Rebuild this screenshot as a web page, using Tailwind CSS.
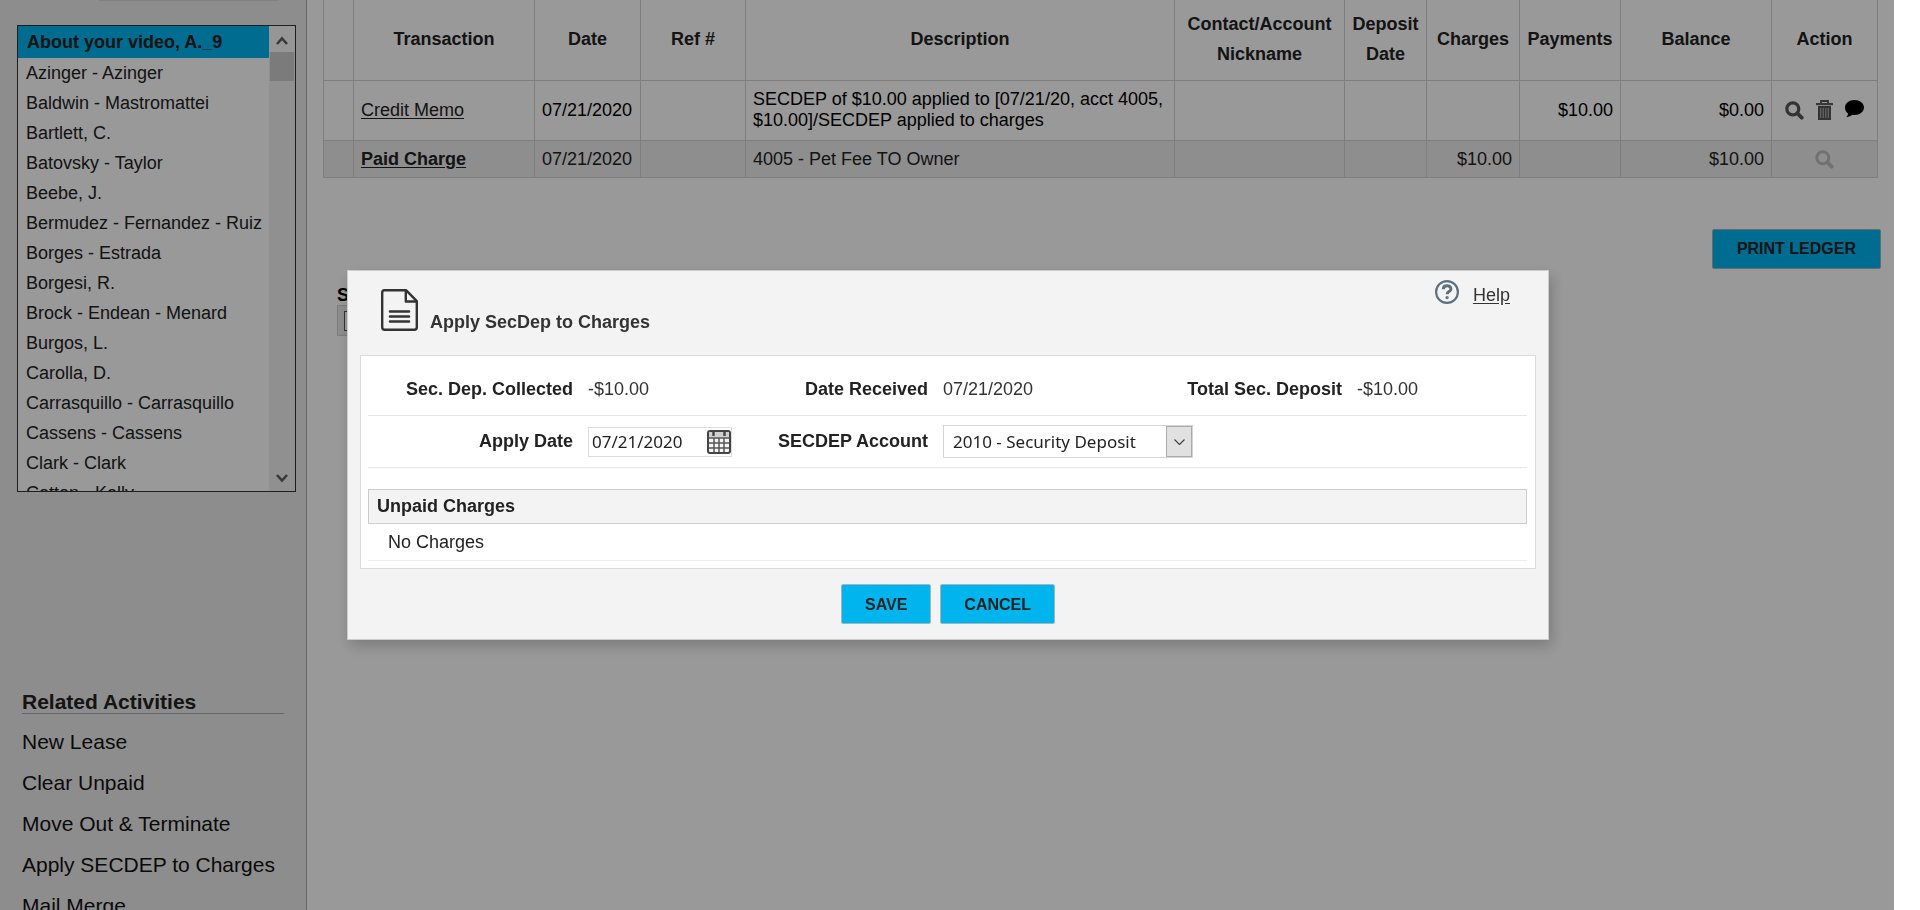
<!DOCTYPE html>
<html lang="en">
<head>
<meta charset="utf-8">
<title>Tenant Ledger</title>
<script src="https://cdn.jsdelivr.net/npm/@tailwindcss/browser@4"></script>
</head>
<body class="h-screen overflow-hidden bg-white pr-[26px] text-[18px] leading-[21px] text-[#222] [font-family:'Liberation_Sans',Arial,sans-serif]">

<div class="flex h-full">
  <aside class="flex w-[307px] shrink-0 flex-col border-r border-[#a9a9b5] bg-[#ebebeb]">
    <div class="mr-[27px] ml-[99px] h-px shrink-0 bg-[#d6d6d6]"></div>
    <nav aria-label="Tenants" class="mt-6 mr-[10px] ml-[17px] flex h-[467px] shrink-0 border border-[#333] bg-white">
      <ul class="min-w-0 flex-1 overflow-hidden whitespace-nowrap leading-[30px]">
        <li><a href="#" class="block bg-[#00b4ee] pl-[9px] font-bold leading-8">About your video, A._9</a></li>
        <li><a href="#" class="block pl-2">Azinger - Azinger</a></li>
        <li><a href="#" class="block pl-2">Baldwin - Mastromattei</a></li>
        <li><a href="#" class="block pl-2">Bartlett, C.</a></li>
        <li><a href="#" class="block pl-2">Batovsky - Taylor</a></li>
        <li><a href="#" class="block pl-2">Beebe, J.</a></li>
        <li><a href="#" class="block pl-2">Bermudez - Fernandez - Ruiz</a></li>
        <li><a href="#" class="block pl-2">Borges - Estrada</a></li>
        <li><a href="#" class="block pl-2">Borgesi, R.</a></li>
        <li><a href="#" class="block pl-2">Brock - Endean - Menard</a></li>
        <li><a href="#" class="block pl-2">Burgos, L.</a></li>
        <li><a href="#" class="block pl-2">Carolla, D.</a></li>
        <li><a href="#" class="block pl-2">Carrasquillo - Carrasquillo</a></li>
        <li><a href="#" class="block pl-2">Cassens - Cassens</a></li>
        <li><a href="#" class="block pl-2">Clark - Clark</a></li>
        <li><a href="#" class="block pl-2">Cotton - Kelly</a></li>
      </ul>
      <div class="flex w-[26px] flex-col items-center bg-[#f0f0f0]">
        <button type="button" aria-label="Scroll up" class="flex h-[26px] w-full items-center justify-center bg-[#fafafa]">
          <svg class="mt-1 h-[10px] w-3" viewBox="0 0 12 10" fill="none" stroke="#606060" stroke-width="2.6"><path d="M1 8 6 2.5 11 8"/></svg>
        </button>
        <div class="h-[29px] w-6 bg-[#cdcdcd]"></div>
        <button type="button" aria-label="Scroll down" class="mt-auto flex h-[26px] w-full items-center justify-center">
          <svg class="h-[10px] w-3" viewBox="0 0 12 10" fill="none" stroke="#606060" stroke-width="2.6"><path d="M1 2 6 7.5 11 2"/></svg>
        </button>
      </div>
    </nav>
    <nav aria-labelledby="related" class="mt-[199px] mr-[22px] ml-[22px] text-[21px] whitespace-nowrap">
      <h2 id="related" class="border-b border-[#a9a9b5] font-bold leading-[22px]">Related Activities</h2>
      <ul class="mt-[7px] leading-[41px] text-[#111]">
        <li><a href="#">New Lease</a></li>
        <li><a href="#">Clear Unpaid</a></li>
        <li><a href="#">Move Out &amp; Terminate</a></li>
        <li><a href="#">Apply SECDEP to Charges</a></li>
        <li><a href="#">Mail Merge</a></li>
      </ul>
    </nav>
  </aside>

  <main class="min-w-0 flex-1 px-4">
    <table class="w-full table-fixed border-collapse text-black [&_td]:border [&_td]:border-[#d3d3d3] [&_td]:px-[7px] [&_th]:border [&_th]:border-t-0 [&_th]:border-[#d3d3d3] [&_th]:pb-[2px]">
      <colgroup>
        <col class="w-[30px]"><col class="w-[181px]"><col class="w-[106px]"><col class="w-[105px]"><col><col class="w-[170px]"><col class="w-[82px]"><col class="w-[93px]"><col class="w-[101px]"><col class="w-[151px]"><col class="w-[106px]">
      </colgroup>
      <thead>
        <tr class="h-[80px] leading-[30px] text-[#222]">
          <th></th><th>Transaction</th><th>Date</th><th>Ref #</th><th>Description</th><th>Contact/Account Nickname</th><th>Deposit Date</th><th>Charges</th><th>Payments</th><th>Balance</th><th>Action</th>
        </tr>
      </thead>
      <tbody>
        <tr class="h-[60px]">
          <td></td>
          <td><a href="#" class="text-[#222] underline underline-offset-2">Credit Memo</a></td>
          <td>07/21/2020</td>
          <td></td>
          <td>SECDEP of $10.00 applied to [07/21/20, acct 4005, $10.00]/SECDEP applied to charges</td>
          <td></td><td></td><td></td>
          <td class="text-right">$10.00</td>
          <td class="text-right">$0.00</td>
          <td>
            <div class="flex items-center justify-between px-[6px]">
              <button type="button" aria-label="View"><svg class="size-[19px]" viewBox="0 0 19 19" fill="none" stroke="#555"><circle cx="7.8" cy="7.8" r="6" stroke-width="3.2"/><path d="m12.5 12.5 4.200 4.200" stroke-width="3.800" stroke-linecap="round"/></svg></button>
              <button type="button" aria-label="Delete"><svg class="h-5 w-[17px]" viewBox="0 0 17 20"><path d="M5 3.500V1h7v2.500" fill="none" stroke="#555" stroke-width="1.8"/><path d="M0 3h17v2.200H0z" fill="#606060"/><path d="M2 6h13v14H2z" fill="#555"/><path d="M4.700 8v10M7.200 8v10M9.800 8v10M12.300 8v10" stroke="#b5b5b5" stroke-width="1.100"/></svg></button>
              <button type="button" aria-label="Comment"><svg class="-mt-[3px] h-[17px] w-[19px]" viewBox="0 0 19 17"><path d="M9.500 0C14.700 0 19 3.400 19 7.500S14.700 15 9.500 15c-.7 0-1.400 0-2-.2C6 16 4 17 1 17c1.500-1 2-2 2-3.500C1 12 0 10 0 7.500 0 3.400 4.300 0 9.500 0z"/></svg></button>
            </div>
          </td>
        </tr>
        <tr class="h-[37px] bg-[#ededed] text-[#222] [&_td]:pt-[2px]">
          <td></td>
          <td><a href="#" class="font-bold underline underline-offset-2">Paid Charge</a></td>
          <td>07/21/2020</td>
          <td></td>
          <td>4005 - Pet Fee TO Owner</td>
          <td></td><td></td>
          <td class="text-right">$10.00</td>
          <td></td>
          <td class="text-right">$10.00</td>
          <td><button type="button" aria-label="View" disabled class="mx-auto block"><svg class="size-[19px]" viewBox="0 0 19 19" fill="none" stroke="#bdbdbd"><circle cx="7.800" cy="7.800" r="6" stroke-width="3"/><path d="m12.500 12.500 4.200 4.200" stroke-width="3.800" stroke-linecap="round"/></svg></button></td>
        </tr>
      </tbody>
    </table>
    <div class="mt-[51px] -mr-[3px] flex justify-end">
      <button type="button" class="h-10 rounded-xs border border-[#a5b4ba] bg-[#00b4ee] px-6 text-[16px] font-bold">PRINT LEDGER</button>
    </div>
    <div class="mt-4 ml-[14px] w-40 text-black">
      <label for="status" class="block font-bold leading-5">S</label>
      <div class="h-[31px] border border-[#d0d0d0] bg-[#ebebeb] p-[6px] pt-[5px]">
        <input id="status" type="text" class="block h-5 w-24 border border-[#555] bg-white">
      </div>
    </div>
  </main>
</div>

<div class="fixed inset-y-0 right-[26px] left-0 flex items-center justify-center bg-black/40 pl-[2px]">
  <form role="dialog" aria-labelledby="dialog-title" class="w-[1202px] max-w-full border border-[#ccc] bg-[#f3f3f3] pb-[15px] shadow-[3px_6px_14px_rgba(0,0,0,0.2)]">
    <header class="flex h-[84px] items-start justify-between pr-[38px] pl-[33px]">
      <div class="flex items-end gap-3 pt-[18px]">
        <svg class="h-[42px] w-[37px]" viewBox="0 0 37 42" fill="none" stroke="#333" stroke-width="2.4" stroke-linejoin="round"><path d="M3.500 1.200H25l10.800 11v26a2.500 2.500 0 0 1-2.500 2.500H3.700a2.500 2.500 0 0 1-2.500-2.500V3.700a2.500 2.500 0 0 1 2.300-2.500z"/><path d="M24.800 1.200v11.300h11"/><path d="M9 22.500h19M9 27.500h19M9 32.500h19" stroke-width="2.600" stroke-linecap="round"/></svg>
        <h1 id="dialog-title" class="font-bold leading-[18px] text-[#333]">Apply SecDep to Charges</h1>
      </div>
      <div class="flex items-start gap-[14px] pt-[9px]">
        <svg class="size-6" viewBox="0 0 24 24" fill="none" stroke="#5d707f"><circle cx="12" cy="12" r="10.900" stroke-width="2.200"/><path d="M8.300 9.200c0-4.500 7.600-4.500 7.600-.3 0 2.800-3.700 2.600-3.700 5.300" stroke-width="3"/><circle cx="12.100" cy="17.600" r="1" stroke-width="1.400"/></svg>
        <a href="#" class="pt-[5px] text-[#333] underline underline-offset-2">Help</a>
      </div>
    </header>

    <section class="mx-3 border border-[#dcdcdc] bg-white pr-2 pb-[7px] pl-[7px]">
      <dl class="grid h-[60px] grid-cols-[205px_144px_181px_214px_170px_1fr] items-center gap-x-[15px] border-b border-[#e5e5e5] pt-[7px] whitespace-nowrap [&_dd]:text-[#333] [&_dt]:text-right [&_dt]:font-bold">
        <dt>Sec. Dep. Collected</dt><dd>-$10.00</dd>
        <dt>Date Received</dt><dd>07/21/2020</dd>
        <dt>Total Sec. Deposit</dt><dd>-$10.00</dd>
      </dl>
      <div class="grid h-[52px] grid-cols-[205px_144px_181px_1fr] items-center gap-x-[15px] border-b border-[#e5e5e5] whitespace-nowrap">
        <label for="apply-date" class="text-right font-bold">Apply Date</label>
        <div class="flex h-[30px] items-center border border-[#dcdcdc] pl-[3px]">
          <input id="apply-date" type="text" value="07/21/2020" class="w-0 min-w-0 flex-1 text-[17px] [font-family:'Noto_Sans',sans-serif]">
          <button type="button" aria-label="Choose date">
            <svg class="size-6" viewBox="0 0 24 24"><rect x="1" y="1" width="22" height="22" rx="2" fill="#f4f4f4" stroke="#444" stroke-width="2"/><path d="M2 2h20v5.500H2z" fill="#d0d0d0"/><path d="M6.500 2v4M17.500 2v4" stroke="#444" stroke-width="2.400"/><path d="M2 8h20M2 13h20M2 18h20M7 8v14M12 8v14M17 8v14" fill="none" stroke="#555" stroke-width="1.500"/></svg>
          </button>
        </div>
        <label for="account" class="text-right font-bold">SECDEP Account</label>
        <div class="relative h-[33px] w-[250px]">
          <select id="account" class="h-full w-full appearance-none border border-[#d5d5d5] bg-white pl-[9px] text-[17px] [font-family:'Noto_Sans',sans-serif]">
            <option>2010 - Security Deposit</option>
          </select>
          <span class="pointer-events-none absolute inset-y-px right-px flex w-[26px] items-center justify-center border border-[#aaa] bg-[#e1e1e1]">
            <svg class="h-[6px] w-[11px]" viewBox="0 0 11 6" fill="none" stroke="#444" stroke-width="1.200"><path d="M.5.500l5 5 5-5"/></svg>
          </span>
        </div>
      </div>
      <h2 class="mt-[21px] h-[35px] border border-[#ccc] bg-[#f3f3f3] pl-2 font-bold leading-[33px]">Unpaid Charges</h2>
      <p class="h-[37px] border-b border-[#eee] pl-5 leading-9">No Charges</p>
    </section>

    <footer class="mt-[15px] flex justify-center gap-[9px] text-[16px] font-bold">
      <button type="submit" class="h-10 rounded-xs border border-[#a5b4ba] bg-[#00b4ee] px-[23px]">SAVE</button>
      <button type="button" class="h-10 rounded-xs border border-[#a5b4ba] bg-[#00b4ee] px-[23px]">CANCEL</button>
    </footer>
  </form>
</div>
</body>
</html>
